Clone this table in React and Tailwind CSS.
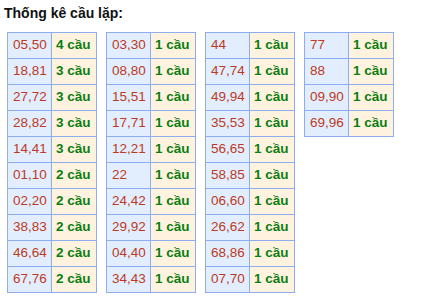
import React from "react";

const cols = [
  [["05,50","4 cầu"],["18,81","3 cầu"],["27,72","3 cầu"],["28,82","3 cầu"],["14,41","3 cầu"],["01,10","2 cầu"],["02,20","2 cầu"],["38,83","2 cầu"],["46,64","2 cầu"],["67,76","2 cầu"]],
  [["03,30","1 cầu"],["08,80","1 cầu"],["15,51","1 cầu"],["17,71","1 cầu"],["12,21","1 cầu"],["22","1 cầu"],["24,42","1 cầu"],["29,92","1 cầu"],["04,40","1 cầu"],["34,43","1 cầu"]],
  [["44","1 cầu"],["47,74","1 cầu"],["49,94","1 cầu"],["35,53","1 cầu"],["56,65","1 cầu"],["58,85","1 cầu"],["06,60","1 cầu"],["26,62","1 cầu"],["68,86","1 cầu"],["07,70","1 cầu"]],
  [["77","1 cầu"],["88","1 cầu"],["09,90","1 cầu"],["69,96","1 cầu"]],
];

export default function App() {
  return (
    <div className="w-[426px] h-[298px] bg-white overflow-hidden" style={{ fontFamily: '"Liberation Sans", Arial, sans-serif' }}>
      <div className="pl-[4px] pt-[5px] h-[32px] text-[14px] font-bold text-[#111] leading-[17px]">Thống kê cầu lặp:</div>
      <div className="flex items-start gap-[9px] pl-[7px]">
        {cols.map((rows, i) => (
          <div key={i} className="grid grid-cols-[43px_44px] auto-rows-[25px] gap-px p-px bg-[#8eacf0]">
            {rows.map(([a, b], j) => (
              <React.Fragment key={j}>
                <div className="bg-[#e2eefe] text-[#bc3a24] text-[13.5px] pl-[5px] flex items-center">{a}</div>
                <div className="bg-[#fff3e0] text-[#0a7d12] text-[13.5px] font-bold pl-[4px] flex items-center">{b}</div>
              </React.Fragment>
            ))}
          </div>
        ))}
      </div>
    </div>
  );
}
